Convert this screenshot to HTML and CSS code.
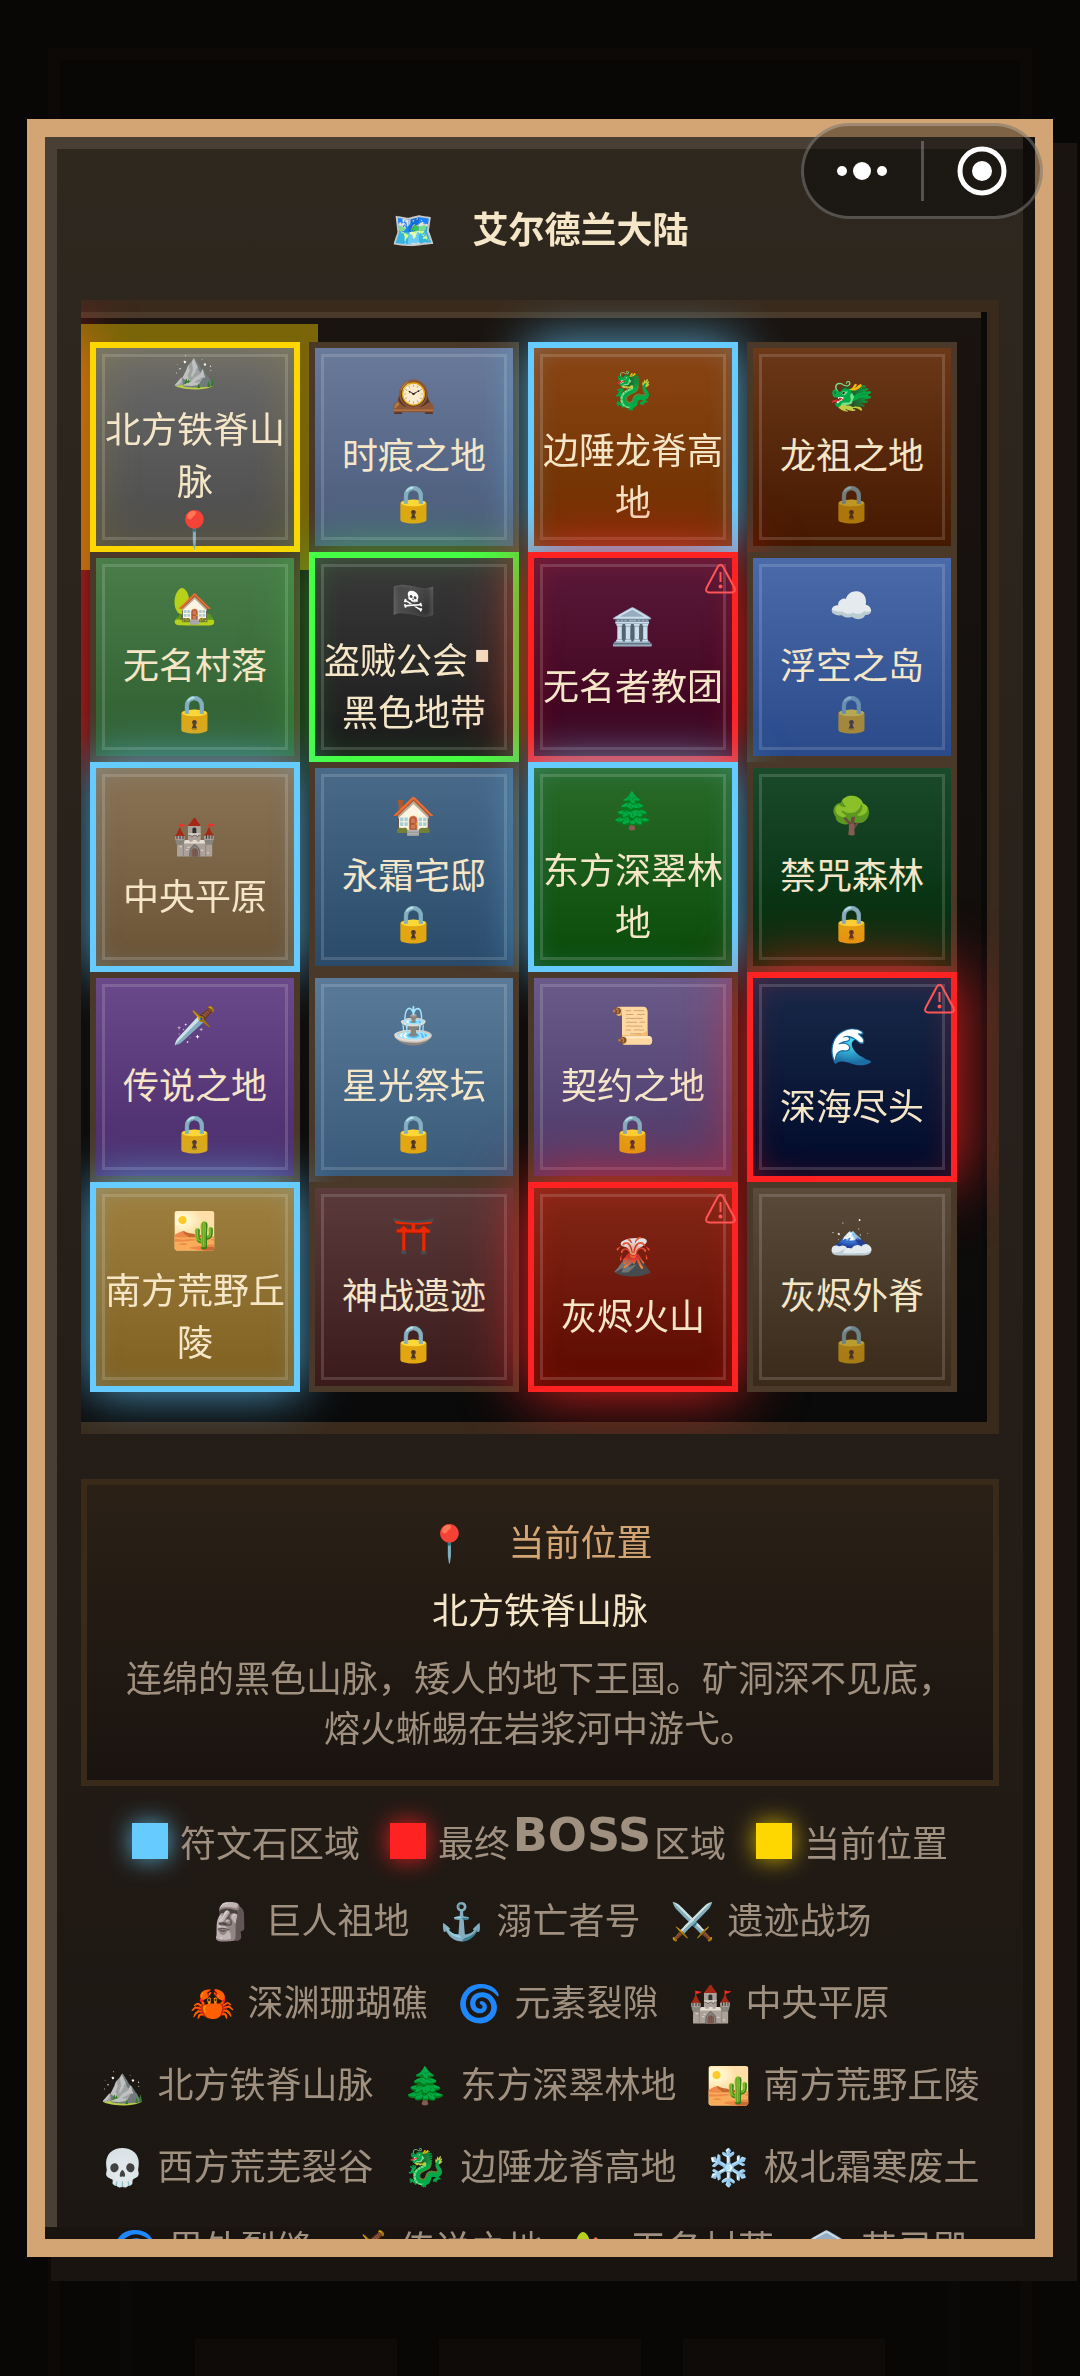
FILE: index.html
```html
<!DOCTYPE html>
<html lang="zh-CN">
<head>
    <meta charset="UTF-8">
    <meta name="viewport" content="width=device-width, initial-scale=1.0">
    <title>艾尔德兰大陆</title>
    <link rel="stylesheet" href="styles.css">
</head>
<body>
    <!-- 背景页 -->
    <div class="backdrop">
        <div class="backdrop-panel">
            <div class="backdrop-inner">
                <span class="backdrop-slot"></span>
                <span class="backdrop-slot"></span>
                <span class="backdrop-slot"></span>
            </div>
        </div>
    </div>

    <div class="overlay">
        <main class="modal">
            <h1 class="modal-title"><span class="emoji">🗺️</span>艾尔德兰大陆</h1>

            <div class="map-scroll">
                <div class="map">
                    <button class="tile mountain current"><span class="tile-icon">⛰️</span><span class="tile-name">北方铁脊山脉</span><span class="tile-mark">📍</span></button>
                    <button class="tile time"><span class="tile-icon">🕰️</span><span class="tile-name">时痕之地</span><span class="tile-mark">🔒</span></button>
                    <button class="tile highland rune"><span class="tile-icon">🐉</span><span class="tile-name">边陲龙脊高地</span></button>
                    <button class="tile dragon"><span class="tile-icon">🐲</span><span class="tile-name">龙祖之地</span><span class="tile-mark dim">🔒</span></button>

                    <button class="tile village"><span class="tile-icon">🏡</span><span class="tile-name">无名村落</span><span class="tile-mark">🔒</span></button>
                    <button class="tile thieves guild"><span class="tile-icon">🏴‍☠️</span><span class="tile-name">盗贼公会<span class="dot">▪</span>黑色地带</span></button>
                    <button class="tile cult boss"><span class="tile-icon">🏛️</span><span class="tile-name">无名者教团</span><svg class="warn" viewBox="0 0 33 31"><path d="M14 3.5Q16.5 0 19 3.5L30.5 25Q32 29 28 29.5H5Q1 29 2.5 25Z"/><path d="M16.5 9V19"/><circle cx="16.5" cy="23.5" r="1"/></svg></button>
                    <button class="tile sky"><span class="tile-icon">☁️</span><span class="tile-name">浮空之岛</span><span class="tile-mark dim">🔒</span></button>

                    <button class="tile plain rune"><span class="tile-icon">🏰</span><span class="tile-name">中央平原</span></button>
                    <button class="tile frost"><span class="tile-icon">🏠</span><span class="tile-name">永霜宅邸</span><span class="tile-mark">🔒</span></button>
                    <button class="tile forest rune"><span class="tile-icon">🌲</span><span class="tile-name">东方深翠林地</span></button>
                    <button class="tile cursed"><span class="tile-icon">🌳</span><span class="tile-name">禁咒森林</span><span class="tile-mark">🔒</span></button>

                    <button class="tile legend-land"><span class="tile-icon">🗡️</span><span class="tile-name">传说之地</span><span class="tile-mark">🔒</span></button>
                    <button class="tile altar"><span class="tile-icon">⛲</span><span class="tile-name">星光祭坛</span><span class="tile-mark">🔒</span></button>
                    <button class="tile pact"><span class="tile-icon">📜</span><span class="tile-name">契约之地</span><span class="tile-mark">🔒</span></button>
                    <button class="tile sea boss"><span class="tile-icon">🌊</span><span class="tile-name">深海尽头</span><svg class="warn" viewBox="0 0 33 31"><path d="M14 3.5Q16.5 0 19 3.5L30.5 25Q32 29 28 29.5H5Q1 29 2.5 25Z"/><path d="M16.5 9V19"/><circle cx="16.5" cy="23.5" r="1"/></svg></button>

                    <button class="tile desert rune"><span class="tile-icon">🏜️</span><span class="tile-name">南方荒野丘陵</span></button>
                    <button class="tile ruins"><span class="tile-icon">⛩️</span><span class="tile-name">神战遗迹</span><span class="tile-mark">🔒</span></button>
                    <button class="tile volcano boss"><span class="tile-icon">🌋</span><span class="tile-name">灰烬火山</span><svg class="warn" viewBox="0 0 33 31"><path d="M14 3.5Q16.5 0 19 3.5L30.5 25Q32 29 28 29.5H5Q1 29 2.5 25Z"/><path d="M16.5 9V19"/><circle cx="16.5" cy="23.5" r="1"/></svg></button>
                    <button class="tile ash"><span class="tile-icon">🗻</span><span class="tile-name">灰烬外脊</span><span class="tile-mark dim">🔒</span></button>
                </div>
            </div>

            <section class="info">
                <h2 class="info-label"><span class="emoji">📍</span>当前位置</h2>
                <p class="info-name">北方铁脊山脉</p>
                <p class="info-desc">连绵的黑色山脉，矮人的地下王国。矿洞深不见底，熔火蜥蜴在岩浆河中游弋。</p>
            </section>

            <ul class="legend">
                <li class="key"><span class="swatch swatch-rune"></span>符文石区域</li>
                <li class="key"><span class="swatch swatch-boss"></span><span class="key-text">最终<span class="pixel">BOSS</span>区域</span></li>
                <li class="key"><span class="swatch swatch-current"></span>当前位置</li>
                <li><span class="emoji">🗿</span>巨人祖地</li>
                <li><span class="emoji">⚓</span>溺亡者号</li>
                <li><span class="emoji">⚔️</span>遗迹战场</li>
                <li><span class="emoji">🦀</span>深渊珊瑚礁</li>
                <li><span class="emoji">🌀</span>元素裂隙</li>
                <li><span class="emoji">🏰</span>中央平原</li>
                <li><span class="emoji">⛰️</span>北方铁脊山脉</li>
                <li><span class="emoji">🌲</span>东方深翠林地</li>
                <li><span class="emoji">🏜️</span>南方荒野丘陵</li>
                <li><span class="emoji">💀</span>西方荒芜裂谷</li>
                <li><span class="emoji">🐉</span>边陲龙脊高地</li>
                <li><span class="emoji">❄️</span>极北霜寒废土</li>
                <li><span class="emoji">🌀</span>界外裂缝</li>
                <li><span class="emoji">🗡️</span>传说之地</li>
                <li><span class="emoji">🏡</span>无名村落</li>
                <li><span class="emoji">🏛️</span>英灵殿</li>
            </ul>
        </main>
    </div>

    <!-- 小程序胶囊按钮 -->
    <div class="capsule">
        <button class="capsule-btn" aria-label="更多">
            <svg width="50" height="50" viewBox="0 0 50 50" fill="#fff"><circle cx="5" cy="25" r="5"/><circle cx="25" cy="25" r="9"/><circle cx="45" cy="25" r="5"/></svg>
        </button>
        <span class="capsule-line"></span>
        <button class="capsule-btn" aria-label="关闭">
            <svg width="50" height="50" viewBox="0 0 50 50"><circle cx="25" cy="25" r="22" fill="none" stroke="#fff" stroke-width="5"/><circle cx="25" cy="25" r="10" fill="#fff"/></svg>
        </button>
    </div>
</body>
</html>
```
FILE: styles.css
```css
* {
    box-sizing: border-box;
}
body {
    margin: 0;
    height: 100vh;
    overflow: hidden;
    background: #080705;
    color: #f5e6c8;
    font-family: "Noto Sans CJK SC", "Noto Color Emoji", sans-serif;
    font-size: 36px;
}
h1, h2, p, ul {
    margin: 0;
    padding: 0;
}
button {
    font: inherit;
    color: inherit;
    padding: 0;
    border: 0;
    background: none;
    cursor: pointer;
}

/* background page */
.backdrop {
    height: 100vh;
    padding: 48px 48px 0;
}
.backdrop-panel {
    height: 100%;
    border: 12px solid #0c0907;
    border-bottom: 0;
    padding: 400px 60px 0;
}
.backdrop-inner {
    height: 100%;
    display: flex;
    align-items: flex-end;
    justify-content: center;
    gap: 42px;
    border: solid #0b0907;
    border-width: 0 12px;
}
.backdrop-slot {
    width: 202px;
    height: 37px;
    background: #0f0b09;
}

/* modal */
.overlay {
    position: fixed;
    inset: 0;
    display: flex;
    align-items: center;
    justify-content: center;
}
.modal {
    width: 95%;
    height: 90vh;
    padding: 36px;
    overflow: hidden;
    border: 18px solid #d4a574;
    background: linear-gradient(180deg, #2f281f 0%, #251d18 60%, #1c1712 100%);
    box-shadow: 24px 24px 0 #1a1410, inset -12px -12px 0 #1a1410, inset 12px 12px 0 #4a3f35;
}
.emoji {
    width: 45px;
    flex: none;
    text-align: center;
}
.modal-title {
    display: flex;
    justify-content: center;
    gap: 36px;
    margin: 27px 0 46px;
    font-size: 36px;
    line-height: 54px;
    font-weight: bold;
}

/* map */
.map-scroll {
    overflow: hidden;
    margin-bottom: 45px;
}
.map {
    position: relative;
    display: grid;
    grid-template-columns: repeat(4, 1fr);
    column-gap: 9px;
    padding: 30px 30px 30px 9px;
    border: 12px solid #3a2a1c;
    border-left: 0;
    background: linear-gradient(180deg, #1a1410, #0a0a0a);
    box-shadow: inset -6px -6px 0 #0a0a0a, inset 0 6px 0 #4a3a2a;
}
/* glow of the regions scrolled out on the left */
.map::before {
    content: "";
    position: absolute;
    right: 100%;
    top: 30px;
    width: 210px;
    height: 420px;
    box-shadow: 0 0 48px 6px rgba(255, 34, 34, 0.9);
}
.tile {
    position: relative;
    display: flex;
    flex-direction: column;
    align-items: center;
    justify-content: center;
    aspect-ratio: 1;
    min-width: 0;
    min-height: 0;
    padding-bottom: 6px;
    border: 6px solid #4a3828;
}
.tile::before {
    content: "";
    position: absolute;
    inset: 6px;
    border: 3px solid rgba(255, 255, 255, 0.15);
}
.tile-icon {
    line-height: 50px;
    margin-bottom: 10px;
}
.tile-name {
    line-height: 52px;
    text-align: center;
}
.tile-mark {
    line-height: 42px;
}
.dim {
    opacity: 0.65;
}
.dot {
    display: inline-block;
    width: 36px;
    padding-left: 6px;
    font-family: "DejaVu Sans", sans-serif;
    font-size: 24px;
    line-height: 44px;
    text-align: left;
    vertical-align: top;
}
.warn {
    position: absolute;
    top: 5px;
    right: -5px;
    width: 33px;
    height: 31px;
    fill: none;
    stroke: #ff5555;
    stroke-width: 2;
}

.rune {
    border-color: #66ccff;
    box-shadow: 0 0 48px rgba(102, 204, 255, 0.8), inset 0 0 24px rgba(102, 204, 255, 0.25);
}
.boss {
    border-color: #ff2222;
    box-shadow: 0 0 60px rgba(255, 34, 34, 0.9), inset 0 0 30px rgba(255, 34, 34, 0.25);
}
.guild {
    border-color: #44ff44;
    box-shadow: 0 0 48px rgba(68, 255, 68, 0.5), inset 0 0 30px rgba(68, 255, 68, 0.2);
}
.current {
    border-color: #ffd700;
    box-shadow: 0 0 0 18px rgba(255, 215, 0, 0.42), inset 0 0 48px rgba(255, 215, 0, 0.16);
}

.mountain { background: linear-gradient(#6b6b6b, #4a4a4a); }
.time { background: linear-gradient(#6a7a9a, #4a5a7a); }
.highland { background: linear-gradient(#8b4513, #6b2f00); }
.dragon { background: linear-gradient(#6b3818, #451800); }
.village { background: linear-gradient(#4a7d4a, #2f5d2f); }
.thieves { background: linear-gradient(#3a3a3a, #1a1a1a); }
.cult { background: linear-gradient(#5a1a3a, #3a001a); }
.sky { background: linear-gradient(#4a6aaa, #2a4a8a); }
.plain { background: linear-gradient(#8b7355, #6b5335); }
.frost { background: linear-gradient(#4a6a8a, #2a4a6a); }
.forest { background: linear-gradient(#2a6b2a, #0a4b0a); }
.cursed { background: linear-gradient(#1a4a2a, #002a0a); }
.legend-land { background: linear-gradient(#6a4a8a, #4a2a6a); }
.altar { background: linear-gradient(#5a7a9a, #3a5a7a); }
.pact { background: linear-gradient(#6a5a8a, #4a3a6a); }
.sea { background: linear-gradient(#1a2a4a, #000a2a); }
.desert { background: linear-gradient(#a08040, #806020); }
.ruins { background: linear-gradient(#5a3a3a, #3a1a1a); }
.volcano { background: linear-gradient(#852818, #5b0a00); }
.ash { background: linear-gradient(#5a4a3a, #3a2a1a); }

/* current location */
.info {
    padding: 28px 36px 29px;
    border: 6px solid #3a2a1a;
    background: linear-gradient(180deg, #2a2016, #1a1410);
    text-align: center;
    margin-bottom: 34px;
}
.info-label {
    display: flex;
    justify-content: center;
    gap: 36px;
    font-size: 36px;
    font-weight: normal;
    line-height: 54px;
    color: #d4a574;
}
.info-name {
    margin: 14px 0 16px;
    line-height: 54px;
}
.info-desc {
    line-height: 50px;
    color: #a09080;
}

/* legend */
.legend {
    display: flex;
    flex-wrap: wrap;
    justify-content: center;
    gap: 30px;
    list-style: none;
    color: #a09080;
}
.legend li {
    display: flex;
    align-items: center;
    gap: 12px;
    line-height: 52px;
    white-space: nowrap;
}
.legend .key {
    height: 42px;
}
.key-text {
    display: flex;
}
.pixel {
    width: 144px;
    font-family: "DejaVu Sans", sans-serif;
    font-size: 46px;
    font-weight: bold;
    line-height: 40px;
    text-align: center;
}
.swatch {
    width: 36px;
    height: 36px;
}
.swatch-rune {
    background: #66ccff;
    box-shadow: 0 0 24px rgba(102, 204, 255, 0.8);
}
.swatch-boss {
    background: #ff2222;
    box-shadow: 0 0 24px rgba(255, 34, 34, 0.9);
}
.swatch-current {
    background: #ffd700;
    box-shadow: 0 0 24px rgba(255, 215, 0, 0.8);
}

/* capsule */
.capsule {
    position: fixed;
    top: 123px;
    right: 37px;
    display: flex;
    align-items: center;
    width: 242px;
    height: 96px;
    border: 3px solid rgba(255, 255, 255, 0.25);
    border-radius: 48px;
    background: rgba(0, 0, 0, 0.4);
}
.capsule-btn {
    flex: 1;
    display: flex;
    justify-content: center;
}
.capsule-line {
    width: 3px;
    height: 60px;
    background: rgba(255, 255, 255, 0.25);
}
```
